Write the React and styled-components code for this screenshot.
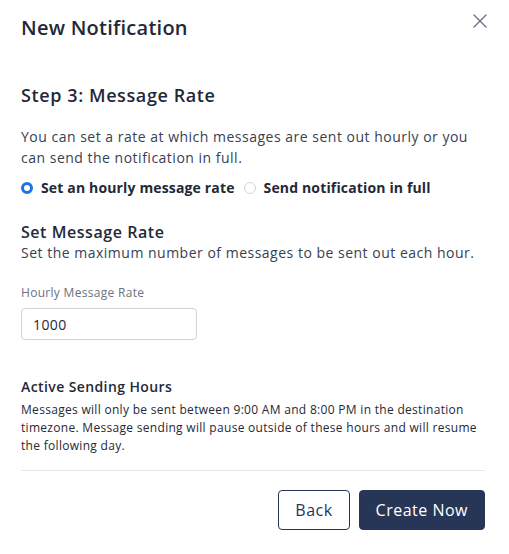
import React from 'react'
import styled, { createGlobalStyle } from 'styled-components';

const GlobalStyle = createGlobalStyle`
  html, body {
    margin: 0;
    padding: 0;
    background: #ffffff;
  }
  body {
    font-family: "Open Sans", "Liberation Sans", sans-serif;
    color: #1f2937;
  }
  * { box-sizing: border-box; }
`;

function App() {
  return (
    <>
      <GlobalStyle />
      <Modal>
        <Header>
          <Title>New Notification</Title>
          <CloseButton aria-label="Close">
            <svg width="14" height="14" viewBox="0 0 14 14">
              <path d="M1 1L13 13M13 1L1 13" stroke="#6b7280" strokeWidth="1.4" strokeLinecap="round" />
            </svg>
          </CloseButton>
        </Header>

        <StepTitle>Step 3: Message Rate</StepTitle>
        <Paragraph>
          You can set a rate at which messages are sent out hourly or you can send the notification in full.
        </Paragraph>

        <RadioGroup>
          <RadioOption>
            <RadioDot checked />
            Set an hourly message rate
          </RadioOption>
          <RadioOption>
            <RadioDot />
            Send notification in full
          </RadioOption>
        </RadioGroup>

        <Section>
          <SectionTitle>Set Message Rate</SectionTitle>
          <Paragraph>Set the maximum number of messages to be sent out each hour.</Paragraph>
        </Section>

        <Field>
          <FieldLabel>Hourly Message Rate</FieldLabel>
          <Input defaultValue="1000" />
        </Field>

        <Section>
          <SmallTitle>Active Sending Hours</SmallTitle>
          <SmallText>
            Messages will only be sent between 9:00 AM and 8:00 PM in the destination timezone. Message sending will pause outside of these hours and will resume the following day.
          </SmallText>
        </Section>

        <Footer>
          <Button>Back</Button>
          <Button primary>Create Now</Button>
        </Footer>
      </Modal>
    </>
  );
}

const Modal = styled.div`
  width: 509px;
  height: 554px;
  padding: 14px 24px 0 21px;
  display: flex;
  flex-direction: column;
  background: #fff;
`;

const Header = styled.div`
  display: flex;
  justify-content: space-between;
  align-items: flex-start;
`;

const Title = styled.h1`
  margin: 0;
  font-size: 20px;
  line-height: 28px;
  font-weight: 600;
  letter-spacing: 0.25px;
  color: #1f2937;
`;

const CloseButton = styled.button`
  border: none;
  background: none;
  padding: 0;
  margin: -1px -3px 0 0;
  width: 16px;
  height: 16px;
  display: flex;
  align-items: center;
  justify-content: center;
  cursor: pointer;
`;

const StepTitle = styled.h2`
  margin: 40px 0 0;
  font-size: 18px;
  line-height: 26px;
  font-weight: 600;
  letter-spacing: 0.6px;
  color: #1f2937;
`;

const Paragraph = styled.p`
  margin: 18px 0 0;
  font-size: 14px;
  line-height: 21px;
  letter-spacing: 0.5px;
  color: #374151;
`;

const RadioGroup = styled.div`
  display: flex;
  align-items: center;
  gap: 9px;
  margin-top: 10px;
`;

const RadioOption = styled.label`
  display: flex;
  align-items: center;
  gap: 8px;
  font-size: 14px;
  line-height: 20px;
  font-weight: 700;
  letter-spacing: 0.15px;
  color: #1f2937;
`;

const RadioDot = styled.span`
  width: 12px;
  height: 12px;
  border-radius: 50%;
  background: #fff;
  border: ${p => (p.checked ? '3.5px solid #1a73e8' : '1.5px solid #d1d5db')};
`;

const Section = styled.div`
  margin-top: 24px;

  ${Paragraph} {
    margin-top: 0;
  }
`;

const SectionTitle = styled.h3`
  margin: 0;
  font-size: 16px;
  line-height: 20px;
  font-weight: 600;
  letter-spacing: 0.55px;
  color: #1f2937;
`;

const Field = styled.div`
  margin-top: 21px;
  display: flex;
  flex-direction: column;
`;

const FieldLabel = styled.label`
  font-size: 12px;
  line-height: 18px;
  letter-spacing: 0.3px;
  color: #6b7280;
`;

const Input = styled.input`
  margin-top: 6px;
  width: 176px;
  height: 32px;
  padding: 0 11px;
  border: 1px solid #d1d5db;
  border-radius: 4px;
  font-family: inherit;
  font-size: 14px;
  letter-spacing: 0.4px;
  color: #1f2937;
  outline: none;
`;

const SmallTitle = styled.h4`
  margin: 0;
  padding-top: 13px;
  font-size: 14px;
  line-height: 20px;
  font-weight: 600;
  letter-spacing: 0.4px;
  color: #1f2937;
`;

const SmallText = styled.p`
  margin: 4px 0 0;
  font-size: 12px;
  line-height: 18px;
  letter-spacing: 0.3px;
  color: #1f2937;
`;

const Footer = styled.div`
  margin-top: 15px;
  padding-top: 19px;
  border-top: 1px solid #e5e7eb;
  display: flex;
  justify-content: flex-end;
  gap: 9px;
`;

const Button = styled.button`
  height: 40px;
  padding: 0 16px;
  border-radius: 4px;
  font-family: inherit;
  font-size: 16px;
  letter-spacing: 0.5px;
  cursor: pointer;
  border: 1px solid #273657;
  background: ${p => (p.primary ? '#273657' : '#ffffff')};
  color: ${p => (p.primary ? '#ffffff' : '#273657')};
`;

export default App;
